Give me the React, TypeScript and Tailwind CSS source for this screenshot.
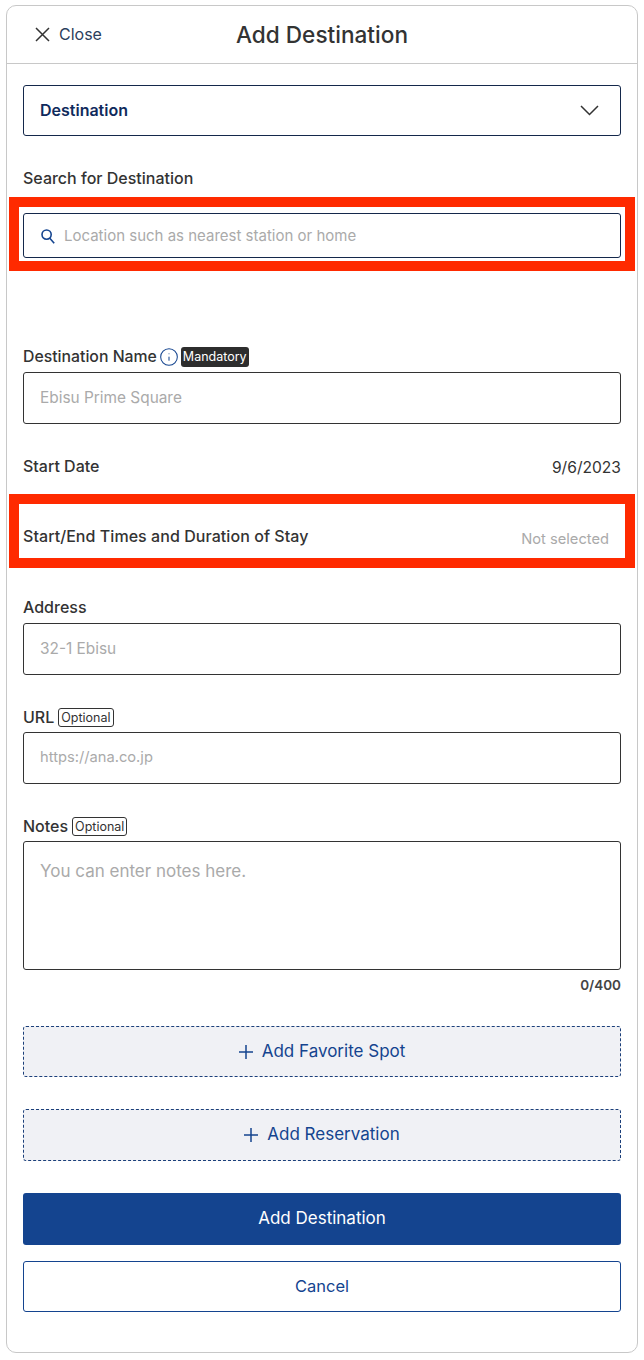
import { Info } from "lucide-react"

function Tag({ children, dark }: { children: string; dark?: boolean }) {
  return dark ? (
    <span className="rounded-[3px] bg-[#2d2d2d] px-[2px] text-[12.5px] leading-[20px] font-normal text-white">
      {children}
    </span>
  ) : (
    <span className="rounded-[3px] border border-[#333] px-[2px] text-[12.5px] leading-[17px] font-normal text-[#333]">
      {children}
    </span>
  )
}

function Field({ placeholder, className }: { placeholder: string; className: string }) {
  return (
    <div className={`flex h-[52px] items-center rounded-[3px] border border-[#333] px-4 pb-[1px] text-[#aaa] ${className}`}>
      {placeholder}
    </div>
  )
}

function PlusIcon() {
  return (
    <svg width="14" height="14" viewBox="0 0 14 14" fill="none" stroke="currentColor" strokeWidth="1.5">
      <path d="M7 0v14M0 7h14" />
    </svg>
  )
}

function DashedButton({ label, className }: { label: string; className: string }) {
  return (
    <button className={`flex w-full items-center justify-center gap-[9px] rounded-[3px] border border-dashed border-[#1b3f7a] bg-[#f0f1f5] text-[17px] text-[#14448f] ${className}`}>
      <PlusIcon />
      {label}
    </button>
  )
}

export default function App() {
  return (
    <div className="bg-white px-[6px] pt-[5px] pb-[6px] font-['Inter',sans-serif] text-[#333]">
      <div className="h-[1348px] rounded-[10px] border border-[#c8c8c8]">
        <header className="relative flex h-[58px] items-center justify-center border-b border-[#c8c8c8]">
          <div className="absolute left-[28px] flex items-center gap-[9px] pb-[1px] text-base text-[#2c3e5c]">
            <svg width="15" height="15" viewBox="0 0 15 15" fill="none" stroke="#333" strokeWidth="1.5">
              <path d="M1 1l13 13M14 1L1 14" />
            </svg>
            Close
          </div>
          <h1 className="text-[22.6px] font-medium">Add Destination</h1>
        </header>

        <div className="px-4 pt-[21px]">
          <div className="flex h-[51px] items-center justify-between rounded-[3px] border border-[#14284b] pr-[21px] pb-[1px] pl-4 text-base font-semibold text-[#0f2a5c]">
            Destination
            <svg width="19" height="11" viewBox="0 0 19 11" fill="none" stroke="#333" strokeWidth="1.5">
              <path d="M1 1l8.5 8.5L18 1" />
            </svg>
          </div>

          <div className="mt-[32px] text-base leading-[20px] font-medium">Search for Destination</div>

          <div className="-mx-3.5 mt-[9px] border-[10px] border-[#ff2a00] px-[4px] pt-[6px] pb-[3px]">
            <div className="flex h-[45px] items-center gap-[9px] rounded-[3px] border border-[#14284b] pt-[1px] pl-[17px] text-[15px] text-[#aaa]">
              <svg width="14" height="15" viewBox="0 0 14 15" fill="none" stroke="#14448f" strokeWidth="1.6">
                <circle cx="5.6" cy="5.6" r="4.6" />
                <path d="M8.8 9.2l4.4 5" />
              </svg>
              Location such as nearest station or home
            </div>
          </div>

          <div className="mt-[76px] flex h-[20px] items-center gap-[2px] text-[15.8px] font-medium">
            Destination Name
            <Info size={20} strokeWidth={1.25} className="text-[#14448f]" />
            <Tag dark>Mandatory</Tag>
          </div>
          <div className="mt-[5px]">
            <Field placeholder="Ebisu Prime Square" className="text-[15.4px]" />
          </div>

          <div className="mt-[32px] flex items-start justify-between">
            <span className="text-base leading-[20px] font-medium">Start Date</span>
            <span className="mt-[2px] text-[15.6px] leading-[20px]">9/6/2023</span>
          </div>

          <div className="-mx-3.5 mt-[16px] flex h-[74px] items-start justify-between border-[10px] border-[#ff2a00] pt-[22px] pr-[16px] pl-[4px]">
            <span className="text-base leading-[20px] font-medium tracking-[0.06px]">Start/End Times and Duration of Stay</span>
            <span className="mt-[3px] text-[14.7px] leading-[20px] text-[#aaa]">Not selected</span>
          </div>

          <div className="mt-[29px] text-base leading-[20px] font-medium">Address</div>
          <div className="mt-[6px]">
            <Field placeholder="32-1 Ebisu" className="text-[15.4px]" />
          </div>

          <div className="mt-[32px] flex h-[20px] items-center gap-[4px] text-base font-medium">
            URL
            <Tag>Optional</Tag>
          </div>
          <div className="mt-[5px]">
            <Field placeholder="https://ana.co.jp" className="text-[14.7px]" />
          </div>

          <div className="mt-[32px] flex h-[20px] items-center gap-[4px] text-base font-medium">
            Notes
            <Tag>Optional</Tag>
          </div>
          <div className="mt-[5px] h-[129px] rounded-[3px] border border-[#333] px-4 pt-[17px] text-[17px] leading-[24px] text-[#aaa]">
            You can enter notes here.
          </div>
          <div className="mt-[6px] text-right text-[13.5px] leading-[18px] font-semibold text-[#444]">0/400</div>

          <DashedButton label="Add Favorite Spot" className="mt-[32px] h-[51px]" />
          <DashedButton label="Add Reservation" className="mt-[32px] h-[52px]" />

          <button className="mt-[32px] h-[52px] w-full rounded-[3px] bg-[#14448f] text-[17px] text-white">
            Add Destination
          </button>
          <button className="mt-[16px] h-[51px] w-full rounded-[3px] border border-[#14448f] text-[16.5px] text-[#14448f]">
            Cancel
          </button>
        </div>
      </div>
    </div>
  )
}
